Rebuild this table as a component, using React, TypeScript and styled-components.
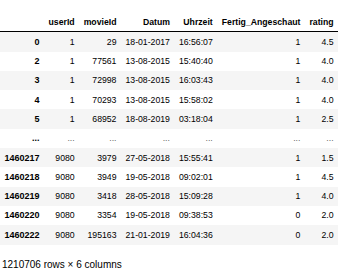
import styled, { createGlobalStyle } from "styled-components"

const GlobalStyle = createGlobalStyle`
  body {
    margin: 0;
    background: #fff;
    font-family: "Liberation Sans", Arial, Helvetica, sans-serif;
    color: #000;
  }
`

const Output = styled.div`
  padding-top: 12px;
`

const Table = styled.table`
  border-collapse: collapse;
  border-spacing: 0;
  font-size: 8.7px;

  th,
  td {
    text-align: right;
    vertical-align: middle;
    padding: 4.5px;
    line-height: 10.3px;
    white-space: nowrap;
  }

  thead th {
    font-weight: bold;
    border-bottom: 1px solid #000;
  }

  tbody th {
    font-weight: bold;
    font-size: 9px;
  }

  tbody tr:nth-child(odd) {
    background: #f5f5f5;
  }
`

const Ellipsis = styled.td`
  color: #666;
`

const Summary = styled.p`
  margin: 14px 0 0 2px;
  font-size: 10px;
  line-height: 11.5px;
`

type Row = [string, string, string, string, string, string, string]

const head: Row[] = [
  ["0", "1", "29", "18-01-2017", "16:56:07", "1", "4.5"],
  ["2", "1", "77561", "13-08-2015", "15:40:40", "1", "4.0"],
  ["3", "1", "72998", "13-08-2015", "16:03:43", "1", "4.0"],
  ["4", "1", "70293", "13-08-2015", "15:58:02", "1", "4.0"],
  ["5", "1", "68952", "18-08-2019", "03:18:04", "1", "2.5"],
]

const tail: Row[] = [
  ["1460217", "9080", "3979", "27-05-2018", "15:55:41", "1", "1.5"],
  ["1460218", "9080", "3949", "19-05-2018", "09:02:01", "1", "4.5"],
  ["1460219", "9080", "3418", "28-05-2018", "15:09:28", "1", "4.0"],
  ["1460220", "9080", "3354", "19-05-2018", "09:38:53", "0", "2.0"],
  ["1460222", "9080", "195163", "21-01-2019", "16:04:36", "0", "2.0"],
]

const columns = ["userId", "movieId", "Datum", "Uhrzeit", "Fertig_Angeschaut", "rating"]

const DataRow = ({ row }: { row: Row }) => (
  <tr>
    <th>{row[0]}</th>
    {row.slice(1).map((v, i) => (
      <td key={i}>{v}</td>
    ))}
  </tr>
)

export default function App() {
  return (
    <>
      <GlobalStyle />
      <Output>
        <Table>
          <thead>
            <tr>
              <th></th>
              {columns.map(c => (
                <th key={c}>{c}</th>
              ))}
            </tr>
          </thead>
          <tbody>
            {head.map(r => (
              <DataRow key={r[0]} row={r} />
            ))}
            <tr>
              <th>...</th>
              {columns.map(c => (
                <Ellipsis key={c}>...</Ellipsis>
              ))}
            </tr>
            {tail.map(r => (
              <DataRow key={r[0]} row={r} />
            ))}
          </tbody>
        </Table>
        <Summary>1210706 rows × 6 columns</Summary>
      </Output>
    </>
  )
}
